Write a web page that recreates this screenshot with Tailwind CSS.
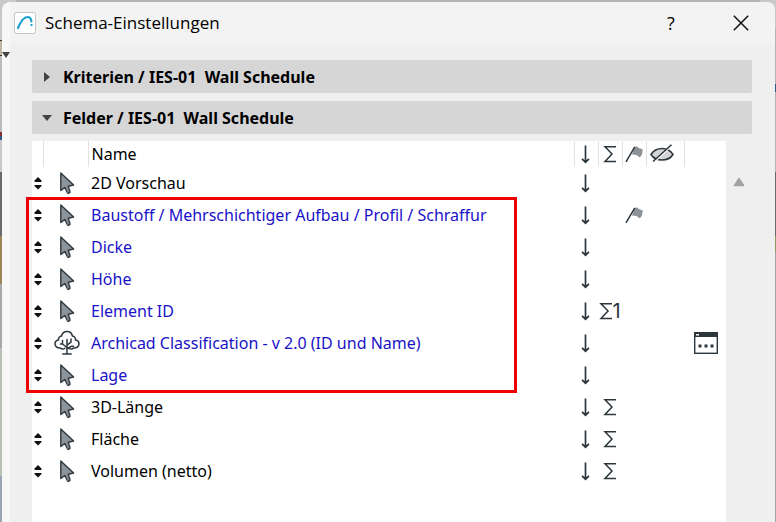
<!DOCTYPE html>
<html lang="de">
<head>
  <meta charset="UTF-8">
  <meta name="viewport" content="width=device-width, initial-scale=1.0">
  <title>Schema-Einstellungen</title>
  <script src="https://cdn.jsdelivr.net/npm/@tailwindcss/browser@4"></script>
</head>
<body class="relative bg-[#b4b4b4] font-['Noto_Sans','Open_Sans',sans-serif] text-black overflow-x-hidden">

  <!-- Anwendung hinter dem Dialog -->
  <div class="absolute inset-0 flex justify-between overflow-hidden" aria-hidden="true">
    <div class="w-4 flex flex-col">
      <div class="h-10 shrink-0 bg-[#c8c8c8]"></div>
      <div class="h-4 shrink-0 bg-[#c0b49c] border-y border-[#333]"></div>
      <div class="h-[76px] shrink-0 bg-[#bcbcbc]"></div>
      <div class="h-1 shrink-0 bg-[#8c2f35]"></div>
      <div class="h-1 shrink-0 bg-[#2d5b8c]"></div>
      <div class="h-8 shrink-0 bg-[#c8c8c8]"></div>
      <div class="h-16 shrink-0 bg-[#6b6b6b]"></div>
      <div class="h-12 shrink-0 bg-[#9c8558]"></div>
      <div class="h-16 shrink-0 bg-[#a8a8a8]"></div>
      <div class="h-32 shrink-0 bg-[#b9c0b6]"></div>
      <div class="grow bg-[#9aa6b6]"></div>
    </div>
    <div class="w-4 flex flex-col">
      <div class="h-7 shrink-0 bg-[#c8c8c8]"></div>
      <div class="h-14 shrink-0 bg-[#b4b4b4]"></div>
      <div class="h-2 shrink-0 bg-[#2d5b8c]"></div>
      <div class="h-20 shrink-0 bg-[#b4b4b4]"></div>
      <div class="h-16 shrink-0 bg-[#6b6b6b]"></div>
      <div class="h-4 shrink-0 bg-[#8c9660]"></div>
      <div class="grow bg-[#a4a4a4]"></div>
    </div>
  </div>

  <!-- Icons -->
  <svg class="hidden">
    <symbol id="i-sort" viewBox="0 0 8 14">
      <path d="M4 1 7.500 4.500V6H.5V4.500z M.5 9h7v1L4 13.500.5 10z" fill="#111"/>
    </symbol>
    <symbol id="i-cursor" viewBox="0 0 26 26">
      <path d="M6.800 3v17.500l4-3 2.500 5c.8 1.500 3.200.6 2.600-1.200L14.200 16.200l5.400-1.200z" fill="#8d9499" stroke="#2c373d" stroke-width="1.400" stroke-linejoin="round"/>
    </symbol>
    <symbol id="i-tree" viewBox="0 0 26 26">
      <g fill="none" stroke="#2c373d" stroke-width="1.500" stroke-linecap="round" stroke-linejoin="round">
        <path d="M11 18.200C9.500 19.500 7.500 19.200 6.500 18 3.500 18.500 1 16.500 1 13.800 1 11.800 2.500 10.300 4.500 10 4.200 8 5.300 6.300 7.600 6 8.200 3.200 10.400 1.500 13 1.500S17.800 3.200 18.400 6C20.700 6.300 21.800 8 21.500 10 23.500 10.300 25 11.800 25 13.800 25 16.500 22.500 18.500 19.500 18 18.500 19.200 16.500 19.500 15 18.200"/>
        <path d="M13 24V9.500M8.800 24h8.400M13 17.500 8.500 14V10.500M8.500 14H6.500M13 15.200l4-3V9M13 19l4.500-2.800h2"/>
      </g>
    </symbol>
    <symbol id="i-down" viewBox="0 0 10 20">
      <path d="M4.500 1.500V18M1 14.800l3.500 3.400L8 14.800" fill="none" stroke="#2c373d" stroke-width="1.700"/>
    </symbol>
    <symbol id="i-sum" viewBox="0 0 14 20">
      <path d="M13 2.800H2l7 7.200-7 7.500h11" fill="none" stroke="#2c373d" stroke-width="1.500"/>
    </symbol>
    <symbol id="i-flag" viewBox="0 0 20 20">
      <path d="M10.500 3.200 12.500 2.200 15 4 18.800 5.500 18 10.500 15.800 13.500 12.500 11 8 10.500z" fill="#8d9499"/>
      <path d="M2 17.800 10.800 2.800" stroke="#2c373d" stroke-width="1.500"/>
    </symbol>
    <symbol id="i-hidden" viewBox="0 0 24 20">
      <path d="M1 10.500C3.500 6.500 7.500 4.500 12 4.500s8.500 2 11 6c-2.500 4-6.500 5.500-11 5.500S3.500 14.500 1 10.500z" fill="#d3d3d3" stroke="#2c373d" stroke-width="1.500"/>
      <path d="M4.500 18 22 1.500" stroke="#fff" stroke-width="1.200"/>
      <path d="M3 17.500 21.500.8" stroke="#2c373d" stroke-width="1.500"/>
    </symbol>
    <symbol id="i-dialog" viewBox="0 0 24 22">
      <rect x=".7" y=".7" width="22.600" height="20.600" fill="#fff" stroke="#2c373d" stroke-width="1.400"/>
      <path d="M0 0h24v5H0z" fill="#2c373d"/>
      <path d="M2 2h3v1.500H2z" fill="#fff"/>
      <path d="M4.500 12.500h3v3h-3zM10.500 12.500h3v3h-3zM16.500 12.500h3v3h-3z" fill="#2c373d"/>
    </symbol>
  </svg>

  <main class="relative mt-0.5 ml-0.5 mr-px min-h-[calc(100vh-2px)] bg-[#efefef] rounded-t-lg overflow-hidden border-l-8 border-[#f7f7f7]">
    <header class="-ml-2 h-[42px] pl-3 pr-[22px] flex items-center bg-[#f3f3f3] font-['Open_Sans',sans-serif]">
      <svg class="size-[22px] mr-[9px]" viewBox="0 0 22 22">
        <rect x=".5" y=".5" width="21" height="21" rx="2" fill="#fff" stroke="#c4c4c4"/>
        <path d="M4 16C6.500 10 9.500 5 13.500 5 16 5 17.200 7 17.400 9.500" fill="none" stroke="#1b9fd0" stroke-width="2.200" stroke-linecap="round"/>
        <path d="M16.500 12h2v2h-2z" fill="#1b9fd0"/>
      </svg>
      <h1 class="grow text-[17px] leading-6">Schema-Einstellungen</h1>
      <button class="w-6 mr-[46px] text-lg leading-6" aria-label="Hilfe">?</button>
      <button class="p-1" aria-label="Schließen">
        <svg class="size-4" viewBox="0 0 16 16"><path d="M.8.8l14.400 14.400M15.200.8.8 15.200" stroke="#111" stroke-width="1.500"/></svg>
      </button>
    </header>

    <div class="pt-4 pl-[22px] pr-[23px] flex flex-col gap-2">
      <button class="h-[33px] px-2.5 flex items-center gap-[11px] rounded-xs bg-[#d6d6d6] text-base font-bold whitespace-pre">
        <svg class="w-[10px] h-3" viewBox="0 0 10 12"><path d="M2 1v10l6-5z" fill="#444"/></svg>Kriterien / IES-01  Wall Schedule</button>
      <button class="h-[33px] px-2.5 flex items-center gap-[11px] rounded-xs bg-[#d6d6d6] text-base font-bold whitespace-pre">
        <svg class="w-[10px] h-3" viewBox="0 0 10 12"><path d="M0 3h10L5 9z" fill="#444"/></svg>Felder / IES-01  Wall Schedule</button>
    </div>

    <div class="mt-[7px] pl-[22px] pr-[23px] flex">
      <div class="relative grow min-h-[381px] bg-white">
        <table class="w-full table-fixed border-collapse text-base leading-6">
          <colgroup>
            <col class="w-[11px]"><col class="w-[45px]"><col>
            <col class="w-6"><col class="w-6"><col class="w-6"><col class="w-[38px]"><col class="w-[42px]">
          </colgroup>
          <thead>
            <tr class="h-[26px]">
              <td></td>
              <td class="border-l border-[#e2e2e2]"></td>
              <th class="pl-[3px] border-l border-[#e2e2e2] text-left font-normal">Name</th>
              <th class="border-l border-[#e2e2e2]" aria-label="Sortierung"><svg class="w-[10px] h-5 mx-auto"><use href="#i-down"/></svg></th>
              <th class="border-l border-[#e2e2e2]" aria-label="Summe"><svg class="w-[14px] h-5 mx-auto"><use href="#i-sum"/></svg></th>
              <th class="border-l border-[#e2e2e2]" aria-label="Markierung"><svg class="w-5 h-5 mx-auto"><use href="#i-flag"/></svg></th>
              <th class="pl-[3px] border-l border-[#e2e2e2]" aria-label="Ausblenden"><svg class="w-6 h-5"><use href="#i-hidden"/></svg></th>
              <td class="border-l border-[#e2e2e2]"></td>
            </tr>
          </thead>
          <tbody id="felder"></tbody>
        </table>
        <!-- Rahmen um die neuen Felder -->
        <div class="absolute top-14 -left-1.5 right-[209px] h-[196px] border-3 border-[#ee0000] pointer-events-none"></div>
      </div>
      <div class="w-[26px] shrink-0 pt-9 flex justify-center items-start">
        <svg class="w-3 h-[10px]" viewBox="0 0 12 10"><path d="M6 1.500 10.500 8.500h-9z" fill="#a3a3a3" stroke="#a3a3a3" stroke-width="1.500" stroke-linejoin="round"/></svg>
      </div>
    </div>
  </main>

  <svg class="absolute top-[52px] left-0.5 w-2 h-1.5" viewBox="0 0 8 6" aria-hidden="true"><path d="M0 0h8L4 6z" fill="#444"/></svg>

  <script>
    const felder = [
      { name: '2D Vorschau' },
      { name: 'Baustoff / Mehrschichtiger Aufbau / Profil / Schraffur', neu: true, flagge: true },
      { name: 'Dicke', neu: true },
      { name: 'Höhe', neu: true },
      { name: 'Element ID', neu: true, summe: '1' },
      { name: 'Archicad Classification - v 2.0 (ID und Name)', neu: true, icon: '#i-tree', dialog: true },
      { name: 'Lage', neu: true },
      { name: '3D-Länge', summe: '' },
      { name: 'Fläche', summe: '' },
      { name: 'Volumen (netto)', summe: '' }
    ];

    const tbody = document.getElementById('felder');
    felder.forEach(feld => {
      const tr = document.createElement('tr');
      tr.className = 'h-8';
      tr.innerHTML = `
        <td class="pl-[2px]"><button class="block" aria-label="Verschieben"><svg class="w-2 h-[14px]"><use href="#i-sort"/></svg></button></td>
        <td class="pl-[11px]"><svg class="size-[26px]"><use href="${feld.icon || '#i-cursor'}"/></svg></td>
        <td class="pl-[3px] whitespace-nowrap ${feld.neu ? 'text-[#1a12c8]' : ''}">${feld.name}</td>
        <td><button class="block mx-auto" aria-label="Sortieren"><svg class="w-[10px] h-5"><use href="#i-down"/></svg></button></td>
        <td>${feld.summe === undefined ? '' : `<button class="flex mx-auto items-center" aria-label="Summe"><svg class="w-[14px] h-5 shrink-0"><use href="#i-sum"/></svg>${feld.summe && `<span class="-ml-px font-['Inter',sans-serif] text-[#2c373d] text-xl leading-5">${feld.summe}</span>`}</button>`}</td>
        <td>${feld.flagge ? '<button class="block mx-auto" aria-label="Markierung"><svg class="size-5"><use href="#i-flag"/></svg></button>' : ''}</td>
        <td></td>
        <td>${feld.dialog ? '<button class="block ml-[10px]" aria-label="Optionen"><svg class="w-6 h-[22px]"><use href="#i-dialog"/></svg></button>' : ''}</td>
      `;
      tbody.appendChild(tr);
    });
  </script>
</body>
</html>
